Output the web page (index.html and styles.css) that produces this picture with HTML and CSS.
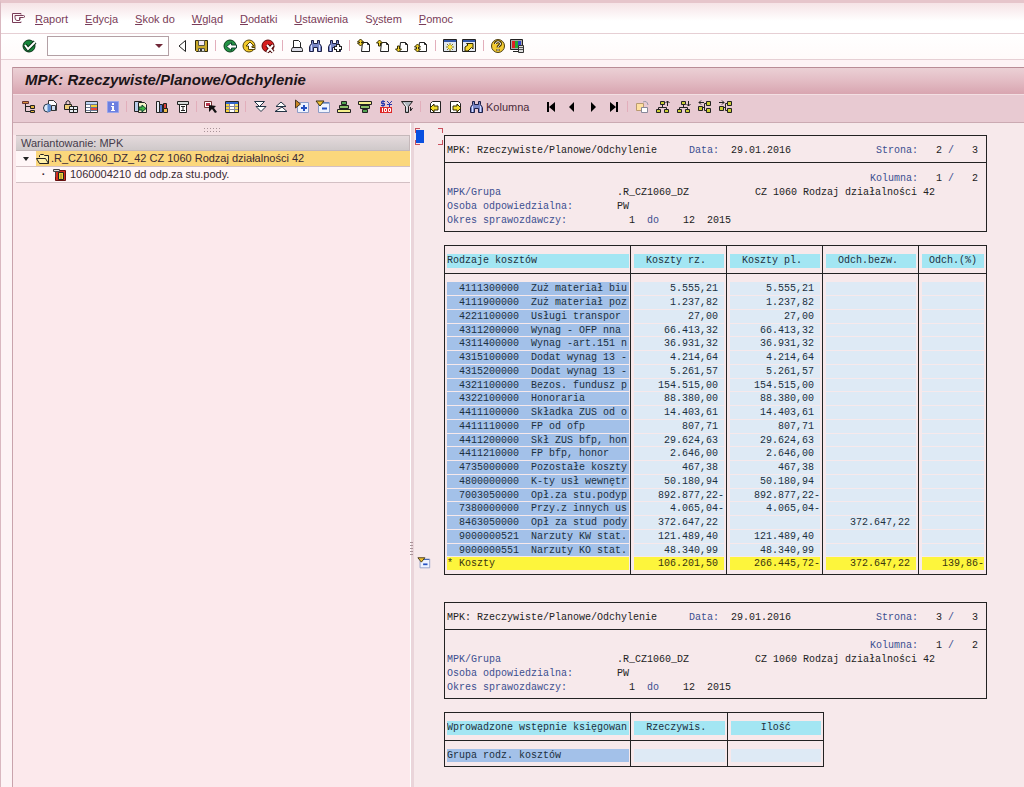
FILE: index.html
```html
<!DOCTYPE html>
<html lang="pl">
<head>
<meta charset="utf-8">
<title>MPK: Rzeczywiste/Planowe/Odchylenie</title>
<link rel="stylesheet" href="styles.css">
</head>
<body>
<svg class="defs" aria-hidden="true">
  <symbol id="binoc" viewBox="0 0 16 16"><path d="M3.500 2.500h2v3h4v-3h2v3l2 3v5h-4v-4h-4v4h-4v-5l2-3z" fill="#7a88c8" stroke="#1c1f45"/><path d="M3.500 7v6M11.500 7v6" stroke="#d5dcff"/></symbol>
  <symbol id="page" viewBox="0 0 16 16"><path d="M6.500 4.500h5l2 2v7h-8z" fill="#fff" stroke="#222"/><path d="M11.500 4.500v2h2" fill="none" stroke="#222"/></symbol>
  <symbol id="minus" viewBox="0 0 16 16"><path d="M3.500 3.500h11v10h-11z" fill="#eef3ff" stroke="#8d9cc6"/><path d="M4 4h10" stroke="#345ca8"/><path d="M1 2h8L5 7z" fill="#f0c030" stroke="#3a3010"/><path d="M7 9.500h5" stroke="#2450c0" stroke-width="2"/></symbol>
</svg>
<div class="window">
  <nav class="menu" aria-label="Menu">
    <button class="menu-icon" aria-label="Menu systemowe"><svg viewBox="0 0 16 16"><path d="M10 3.500V2.500H1.500v9H10v-1M4 6.500V4.500h8.500l1.500 1-1.500 1H8.500v3H6q-2 0-2-3M8.500 8h1.500" fill="none" stroke="#7a3c58"/></svg></button>
    <button><u>R</u>aport</button><button><u>E</u>dycja</button><button><u>S</u>kok do</button><button><u>W</u>gląd</button><button><u>D</u>odatki</button><button><u>U</u>stawienia</button><button>S<u>y</u>stem</button><button><u>P</u>omoc</button>
  </nav>

  <div class="standard">
    <button class="ok" aria-label="Enter"><svg viewBox="0 0 16 16"><ellipse cx="8" cy="8" rx="6" ry="6" fill="#16843a" stroke="#0b3418"/><path d="M4 7l3 4 7-7" fill="none" stroke="#0b3418" stroke-width="4"/><path d="M4 7l3 4 7-7" fill="none" stroke="#fff" stroke-width="2"/></svg></button>
    <div class="command"><input type="text" aria-label="Polecenie"><button aria-label="Historia"><svg viewBox="0 0 8 8"><path d="M0 2h8L4 6z" fill="#702838"/></svg></button></div>
    <button class="slim" aria-label="Zwiń"><svg viewBox="0 0 16 16"><path d="M11.500 2.500v11L5 8z" fill="#fff" stroke="#222"/></svg></button>
    <button aria-label="Zapisz"><svg viewBox="0 0 16 16"><path d="M2.500 2.500h12v11h-11l-1-1z" fill="#c9a92c" stroke="#2d2608"/><path d="M5.500 2.500h6v5h-6z" fill="#f3e9f6" stroke="#554"/><path d="M5.500 10.500h6v3h-6z" fill="#ddd" stroke="#554"/><path d="M7 11h2v2H7z" fill="#333"/></svg></button>
    <i class="sep"></i>
    <button aria-label="Wstecz"><svg viewBox="0 0 16 16"><circle cx="8" cy="8" r="6" fill="#249345" stroke="#0b3d1a"/><path d="M4.500 8.500l5-4v2.500h5v3h-5v2.500z" fill="#fff" stroke="#143"/></svg></button>
    <button aria-label="Wyjdź"><svg viewBox="0 0 16 16"><circle cx="8" cy="8" r="6" fill="#f2c92a" stroke="#55430a"/><path d="M9 4L5 8h2.500v3.500H14v-2h-3V8h2z" fill="#fff" stroke="#54430a"/></svg></button>
    <button aria-label="Anuluj"><svg viewBox="0 0 16 16"><circle cx="8" cy="8" r="6" fill="#d61f1f" stroke="#5a0808"/><path d="M7 7l6 7M13 7l-6 7" stroke="#400" stroke-width="4"/><path d="M7 7l6 7M13 7l-6 7" stroke="#fff" stroke-width="2"/></svg></button>
    <i class="sep"></i>
    <button aria-label="Drukuj"><svg viewBox="0 0 16 16"><path d="M4.500 9.500v-7h5l2 2v5" fill="#fff" stroke="#222"/><path d="M3.500 9.500h9l1 2v2h-11v-2z" fill="#dcdce6" stroke="#222"/></svg></button>
    <button aria-label="Szukaj"><svg><use href="#binoc"/></svg></button>
    <button aria-label="Szukaj dalej"><svg viewBox="0 0 16 16"><use href="#binoc" width="16" height="16"/><path d="M11 6v8M7 10h8" stroke="#222" stroke-width="4"/><path d="M11 7v6M8 10h6" stroke="#fff" stroke-width="2"/></svg></button>
    <i class="sep"></i>
    <button aria-label="Pierwsza strona"><svg viewBox="0 0 16 16"><use href="#page" width="16" height="16"/><path d="M4.500 1l3 3h-2v1h2l-3 3-3-3h2V4h-2z" fill="#f5d52c" stroke="#332b00"/></svg></button>
    <button aria-label="Poprzednia strona"><svg viewBox="0 0 16 16"><use href="#page" width="16" height="16"/><path d="M4.500 2l3 3h-2v3h-2V5h-2z" fill="#f5d52c" stroke="#332b00"/></svg></button>
    <button aria-label="Następna strona"><svg viewBox="0 0 16 16"><use href="#page" width="16" height="16"/><path d="M4.500 14l3-3h-2V8h-2v3h-2z" fill="#f5d52c" stroke="#332b00"/></svg></button>
    <button aria-label="Ostatnia strona"><svg viewBox="0 0 16 16"><use href="#page" width="16" height="16"/><path d="M4.500 14l3-3h-2V9h2l-3-3-3 3h2v2h-2z" fill="#f5d52c" stroke="#332b00"/></svg></button>
    <i class="sep"></i>
    <button aria-label="Nowa sesja"><svg viewBox="0 0 16 16"><path d="M1.500 1.500h13v12h-13z" fill="#dfe6ee" stroke="#222"/><path d="M2 3h12" stroke="#3156a8" stroke-width="2"/><path d="M8 5v8M4 9h8M5 6l6 6M11 6l-6 6" stroke="#8f7a10"/><circle cx="8" cy="9" r="2" fill="#ffe838"/></svg></button>
    <button aria-label="Skrót"><svg viewBox="0 0 16 16"><path d="M1.500 1.500h13v12h-13z" fill="#e5e9f2" stroke="#222"/><path d="M2 3h12" stroke="#3156a8" stroke-width="2"/><path d="M4 13V9l3-2-1.500-1.500H12V11l-1.500-1.500L7 13z" fill="#f5d52c" stroke="#332b00"/></svg></button>
    <i class="sep"></i>
    <button aria-label="Pomoc"><svg viewBox="0 0 16 16"><circle cx="8" cy="8" r="6.500" fill="#f3cb32" stroke="#4a3c10"/><path d="M5.500 6c0-3 5-3 5 0 0 1.500-2.500 1.500-2.500 3.500M8 11v2" fill="none" stroke="#443200" stroke-width="3"/><path d="M5.500 6c0-3 5-3 5 0 0 1.500-2.500 1.500-2.500 3.500M8 11v2" fill="none" stroke="#fff"/></svg></button>
    <button aria-label="Układ lokalny"><svg viewBox="0 0 16 16"><path d="M1.500 1.500h12v10h-12z" fill="#aaa" stroke="#222"/><path d="M3 3h3v7H3z" fill="#d22"/><path d="M6 3h3v7H6z" fill="#2a3"/><path d="M9 3h3v7H9z" fill="#34c"/><path d="M4 13.500h5" stroke="#222"/><path d="M9.500 7.500h5v7h-5z" fill="#ddd" stroke="#333"/><path d="M10 9.500h4M10 11.500h4" stroke="#555"/></svg></button>
  </div>

  <main class="app">
    <header>
      <h1>MPK: Rzeczywiste/Planowe/Odchylenie</h1>
      <div class="tools">
        <button aria-label="Hierarchia"><svg viewBox="0 0 16 16"><path d="M1.500 2.500h6v2h-6z" fill="#d98c3a" stroke="#633"/><path d="M4.500 5v7.500h5M4.500 7.500h5" fill="none" stroke="#222"/><path d="M9.500 6.500h4v3h-4zM9.500 11.500h4v2h-4z" fill="#e3b33c" stroke="#222"/></svg></button>
        <button aria-label="Raport"><svg viewBox="0 0 16 16"><path d="M6.500 1.500h5l3 3v7h-8z" fill="#fff" stroke="#333"/><circle cx="5.500" cy="9" r="4" fill="#dce9fb" stroke="#234"/><path d="M5.500 5v8a4 4 0 0 0 0-8z" fill="#5d8ed0"/><path d="M9.500 6.500h4v5h-4z" fill="#cde" stroke="#333"/></svg></button>
        <button aria-label="Blokada"><svg viewBox="0 0 16 16"><path d="M3 6V3q2-3 4 0v3" fill="none" stroke="#222"/><path d="M1.500 5.500h7v5h-7z" fill="#f0cf78" stroke="#222"/><path d="M6.500 7.500h8v6h-8zM6.500 10.500h8M10.500 7v6" fill="#e8edf2" stroke="#222"/></svg></button>
        <button aria-label="Tabela"><svg viewBox="0 0 16 16"><path d="M1.500 2.500h12v11h-12z" fill="#fff" stroke="#333"/><path d="M2 3h11v2H2z" fill="#bcd3f0"/><path d="M7 6h6v2H7z" fill="#f5cf35"/><path d="M7 9h6v2H7z" fill="#e84a3c"/><path d="M2 5.500h11M2 8.500h11M2 11.500h11M6.500 5v8" stroke="#6b7892"/></svg></button>
        <button aria-label="Informacja"><svg viewBox="0 0 16 16"><path d="M2.500 2.500h11v11h-11z" fill="#6c7fe0" stroke="#98a4ea"/><path d="M7 4h2v2H7zM6 7h3v4h1v1H6v-1h1V8H6z" fill="#fff"/></svg></button>
        <i class="sep"></i>
        <button aria-label="Eksport"><svg viewBox="0 0 16 16"><path d="M1.500 2.500h7v10h-7z" fill="#b9cdea" stroke="#222"/><path d="M5.500 3.500h6l2 2v8h-8z" fill="#f4f4c8" stroke="#222"/><path d="M6 8h3V6l4 3.500L9 13v-2H6z" fill="#3cb441" stroke="#143"/></svg></button>
        <button aria-label="Wykres"><svg viewBox="0 0 16 16"><path d="M2.500 2.500h3v11h-3z" fill="#e9edf4" stroke="#222"/><path d="M5.500 5.500h3v8h-3z" fill="#5678ca" stroke="#222"/><path d="M9.500 4.500h3v5h-3z" fill="#d9403a" stroke="#222"/><path d="M9.500 9.500h4v4h-4z" fill="#f1bc4c" stroke="#222"/></svg></button>
        <button aria-label="Kolumny tekstu"><svg viewBox="0 0 16 16"><path d="M2.500 2.500h11v3h-11z" fill="#d5d9d8" stroke="#222"/><path d="M4.500 5.500h7v8h-7z" fill="#fff" stroke="#222"/><path d="M6 7.500h4M8 8v4M6 11.500h4" stroke="#222"/></svg></button>
        <i class="sep"></i>
        <button aria-label="Wybierz"><svg viewBox="0 0 16 16"><path d="M1.500 2.500h7v6h-7z" fill="#fff" stroke="#733"/><path d="M3 4h4v3H3z" fill="#b8344c"/><path d="M6 6l7 1-2 2 3 4-2 1-3-4-3 3z" fill="#111"/></svg></button>
        <button aria-label="Kolumny"><svg viewBox="0 0 16 16"><path d="M1.500 2.500h13v11h-13z" fill="#fff" stroke="#222"/><path d="M2 3h12v2H2z" fill="#3265c8"/><path d="M2 5h3v8H2z" fill="#f7d33e"/><path d="M11 5h3v8h-3z" fill="#f7e05e"/><path d="M5.500 5v8M10.500 5v8M2 7.500h12M2 10.500h12" stroke="#889"/></svg></button>
        <i class="sep"></i>
        <button aria-label="Rozwiń"><svg viewBox="0 0 16 16"><path d="M2.500 2.500h10l-5 5zM4 7.500h10l-5 5z" fill="#fff" stroke="#234"/></svg></button>
        <button aria-label="Zwiń"><svg viewBox="0 0 16 16"><path d="M3 7.500h10l-5-4.500zM2 12.500h12L9 8z" fill="#fff" stroke="#234"/></svg></button>
        <button aria-label="Rozwiń poziom"><svg viewBox="0 0 16 16"><path d="M3.500 3.500h11v10h-11z" fill="#eef3ff" stroke="#8d9cc6"/><path d="M1.500 1l5 4-5 4z" fill="#c88624" stroke="#432"/><path d="M7 9h6M10 6v6" stroke="#2450c0" stroke-width="2"/></svg></button>
        <button aria-label="Zwiń poziom"><svg><use href="#minus"/></svg></button>
        <button aria-label="Sortuj rosnąco"><svg viewBox="0 0 16 16"><path d="M5.500 2.500h5v3h-5z" fill="#52a452" stroke="#222"/><path d="M3.500 6.500h9v3h-9z" fill="#8cc068" stroke="#222"/><path d="M1.500 10.500h13v3h-13z" fill="#f5f08b" stroke="#222"/></svg></button>
        <button aria-label="Sortuj malejąco"><svg viewBox="0 0 16 16"><path d="M1.500 2.500h13v3h-13z" fill="#f5f08b" stroke="#222"/><path d="M3.500 6.500h9v3h-9z" fill="#8cc068" stroke="#222"/><path d="M5.500 10.500h5v3h-5z" fill="#52a452" stroke="#222"/></svg></button>
        <button aria-label="Waluta"><svg viewBox="0 0 16 16"><path d="M7 2.500H3.500v2H6.500v2H3M5 1v7M9 2l2.500 2.500L14 2M11.500 4v4M9 5.500h5" fill="none" stroke="#2537ae"/><path d="M2 8h12v6H2z" fill="#e02828"/><path d="M4.500 9v4M6.500 9.500h2v3h-2zM10.500 9.500h2v3h-2z" fill="none" stroke="#fff"/></svg></button>
        <button aria-label="Filtr"><svg viewBox="0 0 16 16"><path d="M2.500 2.500h11L9.500 7.500v6h-3v-6z" fill="#aeb6bd" stroke="#222"/><path d="M5 4l3 4v4" fill="none" stroke="#fff"/><path d="M11.500 8v4l2-3" fill="none" stroke="#222"/></svg></button>
        <i class="sep"></i>
        <button aria-label="Poprzednia kolumna"><svg viewBox="0 0 16 16"><path d="M5.500 2.500h8v11h-10v-9z" fill="#fff" stroke="#222"/><path d="M3 9l4-4v2h4v4H7v2z" fill="#f1dc2d" stroke="#332b00"/></svg></button>
        <button aria-label="Następna kolumna"><svg viewBox="0 0 16 16"><path d="M2.500 2.500h8l2 2v9h-10z" fill="#fff" stroke="#222"/><path d="M13 9L9 5v2H5v4h4v2z" fill="#f1dc2d" stroke="#332b00"/></svg></button>
        <button class="labelled"><svg><use href="#binoc"/></svg>Kolumna</button>
        <button aria-label="Pierwsza"><svg viewBox="0 0 16 16"><path d="M4 3h2v10H4zM12 3v10L6 8z" fill="#000"/></svg></button>
        <button aria-label="Poprzednia"><svg viewBox="0 0 16 16"><path d="M10 3v10L5 8z" fill="#000"/></svg></button>
        <button aria-label="Następna"><svg viewBox="0 0 16 16"><path d="M6 3v10l5-5z" fill="#000"/></svg></button>
        <button aria-label="Ostatnia"><svg viewBox="0 0 16 16"><path d="M10 3h2v10h-2zM4 3v10l6-5z" fill="#000"/></svg></button>
        <i class="sep"></i>
        <button aria-label="Kopiuj"><svg viewBox="0 0 16 16"><path d="M2.500 4.500h7v7h-7z" fill="#ffe0a0" stroke="#b99a70"/><path d="M7.500 8.500h6v5h-6z" fill="#fff" stroke="#889"/><path d="M9 3q4-2 5 3" fill="none" stroke="#99a"/></svg></button>
        <button aria-label="Poziom w górę"><svg viewBox="0 0 16 16"><path d="M7.500 5v3M3.500 11V8.500h8V11M12.500 7V2M10.500 4l2-2 2 2" fill="none" stroke="#222"/><path d="M5.500 2.500h4v3h-4zM1.500 10.500h4v3h-4zM9.500 10.500h4v3h-4z" fill="#c8cc35" stroke="#222"/></svg></button>
        <button aria-label="Poziom w dół"><svg viewBox="0 0 16 16"><path d="M7.500 5v3M3.500 11V8.500h8V11M12.500 2v5M10.500 5l2 2 2-2" fill="none" stroke="#222"/><path d="M5.500 2.500h4v3h-4zM1.500 10.500h4v3h-4zM9.500 10.500h4v3h-4z" fill="#c8cc35" stroke="#222"/></svg></button>
        <button aria-label="W lewo"><svg viewBox="0 0 16 16"><path d="M5 8.500h2.500M10 4.500H7.500v7H10M7 3.500H2M4 1.500l-2 2 2 2" fill="none" stroke="#222"/><path d="M1.500 7.500h4v4h-4zM9.500 2.500h4v4h-4zM9.500 9.500h4v4h-4z" fill="#c8cc35" stroke="#222"/></svg></button>
        <button aria-label="W prawo"><svg viewBox="0 0 16 16"><path d="M5 8.500h2.500M10 4.500H7.500v7H10M1 3.500h5M4 1.500l2 2-2 2" fill="none" stroke="#222"/><path d="M1.500 7.500h4v4h-4zM9.500 2.500h4v4h-4zM9.500 9.500h4v4h-4z" fill="#c8cc35" stroke="#222"/></svg></button>
      </div>
    </header>

    <div class="panes">
      <aside>
        <div class="grip"></div>
        <h2>Wariantowanie: MPK</h2>
        <ul>
          <li class="selected"><span class="twist"><svg viewBox="0 0 8 8"><path d="M1 2h6L4 6z" fill="#222"/></svg></span><span class="node"><svg viewBox="0 0 14 14"><path d="M3.500 5V3.500l1-1h3l1 1h4v8h-9l-3-5h9l3 5" fill="#fff0a8" stroke="#222"/></svg>.R_CZ1060_DZ_42 CZ 1060 Rodzaj działalności 42</span></li>
          <li class="leaf"><span class="twist">·</span><span class="node"><svg viewBox="0 0 14 14"><path d="M2.500 2.500h10v10h-10z" fill="#d52b20" stroke="#611"/><path d="M5.500 4.500h5v7h-5z" fill="#e8d43c" stroke="#222"/><path d="M8 6v5" stroke="#973"/><path d="M.5 1.500h6v2h-6z" fill="#ddd" stroke="#444"/><path d="M2.500 4v5" stroke="#444"/></svg>1060004210 dd odp.za stu.pody.</span></li>
        </ul>
      </aside>
      <div class="splitter"></div>
      <section class="report">
        <div class="cursor"></div>
        <div class="sheet">
          <div class="head">
            <div class="line first"><span>MPK: Rzeczywiste/Planowe/Odchylenie</span><b>Data:</b><span>29.01.2016</span><span class="end"><b>Strona:</b>   2 <b>/</b>   3</span></div>
            <div class="info">
              <div class="end"><b>Kolumna:</b>   1 <b>/</b>   2</div>
              <div class="pair"><b>MPK/Grupa</b><span>.R_CZ1060_DZ           CZ 1060 Rodzaj działalności 42</span></div>
              <div class="pair"><b>Osoba odpowiedzialna:</b><span>PW</span></div>
              <div class="pair"><b>Okres sprawozdawczy:</b><span>  1  <b>do</b>    12  2015</span></div>
            </div>
          </div>

          <table class="costs">
            <colgroup><col class="name"><col class="num"><col class="num"><col class="num"><col class="pct"></colgroup>
            <thead><tr><th><span>Rodzaje kosztów</span></th><th><span>Koszty rz.</span></th><th><span>Koszty pl.</span></th><th><span>Odch.bezw.</span></th><th class="even"><span>Odch.(%)</span></th></tr></thead>
            <tbody>
              <tr><td><span>  4111300000  Zuż materiał biu</span></td><td><span>5.555,21 </span></td><td><span>5.555,21 </span></td><td><span> </span></td><td><span> </span></td></tr>
              <tr><td><span>  4111900000  Zuż materiał poz</span></td><td><span>1.237,82 </span></td><td><span>1.237,82 </span></td><td><span> </span></td><td><span> </span></td></tr>
              <tr><td><span>  4221100000  Usługi transpor</span></td><td><span>27,00 </span></td><td><span>27,00 </span></td><td><span> </span></td><td><span> </span></td></tr>
              <tr><td><span>  4311200000  Wynag - OFP nna</span></td><td><span>66.413,32 </span></td><td><span>66.413,32 </span></td><td><span> </span></td><td><span> </span></td></tr>
              <tr><td><span>  4311400000  Wynag -art.151 n</span></td><td><span>36.931,32 </span></td><td><span>36.931,32 </span></td><td><span> </span></td><td><span> </span></td></tr>
              <tr><td><span>  4315100000  Dodat wynag 13 -</span></td><td><span>4.214,64 </span></td><td><span>4.214,64 </span></td><td><span> </span></td><td><span> </span></td></tr>
              <tr><td><span>  4315200000  Dodat wynag 13 -</span></td><td><span>5.261,57 </span></td><td><span>5.261,57 </span></td><td><span> </span></td><td><span> </span></td></tr>
              <tr><td><span>  4321100000  Bezos. fundusz p</span></td><td><span>154.515,00 </span></td><td><span>154.515,00 </span></td><td><span> </span></td><td><span> </span></td></tr>
              <tr><td><span>  4322100000  Honoraria</span></td><td><span>88.380,00 </span></td><td><span>88.380,00 </span></td><td><span> </span></td><td><span> </span></td></tr>
              <tr><td><span>  4411100000  Składka ZUS od o</span></td><td><span>14.403,61 </span></td><td><span>14.403,61 </span></td><td><span> </span></td><td><span> </span></td></tr>
              <tr><td><span>  4411110000  FP od ofp</span></td><td><span>807,71 </span></td><td><span>807,71 </span></td><td><span> </span></td><td><span> </span></td></tr>
              <tr><td><span>  4411200000  Skł ZUS bfp, hon</span></td><td><span>29.624,63 </span></td><td><span>29.624,63 </span></td><td><span> </span></td><td><span> </span></td></tr>
              <tr><td><span>  4411210000  FP bfp, honor</span></td><td><span>2.646,00 </span></td><td><span>2.646,00 </span></td><td><span> </span></td><td><span> </span></td></tr>
              <tr><td><span>  4735000000  Pozostałe koszty</span></td><td><span>467,38 </span></td><td><span>467,38 </span></td><td><span> </span></td><td><span> </span></td></tr>
              <tr><td><span>  4800000000  K-ty usł wewnętr</span></td><td><span>50.180,94 </span></td><td><span>50.180,94 </span></td><td><span> </span></td><td><span> </span></td></tr>
              <tr><td><span>  7003050000  Opł.za stu.podyp</span></td><td><span>892.877,22-</span></td><td><span>892.877,22-</span></td><td><span> </span></td><td><span> </span></td></tr>
              <tr><td><span>  7380000000  Przy.z innych us</span></td><td><span>4.065,04-</span></td><td><span>4.065,04-</span></td><td><span> </span></td><td><span> </span></td></tr>
              <tr><td><span>  8463050000  Opł za stud pody</span></td><td><span>372.647,22 </span></td><td><span> </span></td><td><span>372.647,22 </span></td><td><span> </span></td></tr>
              <tr><td><span>  9000000521  Narzuty KW stat.</span></td><td><span>121.489,40 </span></td><td><span>121.489,40 </span></td><td><span> </span></td><td><span> </span></td></tr>
              <tr><td><span>  9000000551  Narzuty KO stat.</span></td><td><span>48.340,99 </span></td><td><span>48.340,99 </span></td><td><span> </span></td><td><span> </span></td></tr>
              <tr class="total"><td><button aria-label="Zwiń"><svg><use href="#minus"/></svg></button><span>* Koszty</span></td><td><span>106.201,50 </span></td><td><span>266.445,72-</span></td><td><span>372.647,22 </span></td><td><span>139,86-</span></td></tr>
            </tbody>
          </table>

          <div class="head next">
            <div class="line first"><span>MPK: Rzeczywiste/Planowe/Odchylenie</span><b>Data:</b><span>29.01.2016</span><span class="end"><b>Strona:</b>   3 <b>/</b>   3</span></div>
            <div class="info">
              <div class="end"><b>Kolumna:</b>   1 <b>/</b>   2</div>
              <div class="pair"><b>MPK/Grupa</b><span>.R_CZ1060_DZ           CZ 1060 Rodzaj działalności 42</span></div>
              <div class="pair"><b>Osoba odpowiedzialna:</b><span>PW</span></div>
              <div class="pair"><b>Okres sprawozdawczy:</b><span>  1  <b>do</b>    12  2015</span></div>
            </div>
          </div>

          <table class="entries">
            <colgroup><col class="name"><col class="num"><col class="num"></colgroup>
            <thead><tr><th><span>Wprowadzone wstępnie księgowan</span></th><th><span>Rzeczywis.</span></th><th class="even"><span>Ilość</span></th></tr></thead>
            <tbody><tr><td><span>Grupa rodz. kosztów</span></td><td><span> </span></td><td><span> </span></td></tr></tbody>
          </table>
        </div>
      </section>
    </div>
  </main>
</div>
</body>
</html>
```
FILE: styles.css
```css
* { box-sizing: border-box; }
body { margin: 0; background: #fdf3f5; color: #3a2a35; font: 11px/14px "Liberation Sans", Arial, sans-serif; }
button { padding: 0; border: 0; background: none; color: inherit; font: inherit; }
svg { display: block; width: 16px; height: 16px; }
.defs { position: absolute; width: 0; height: 0; }
.window { display: flex; flex-direction: column; min-height: 100vh; border-left: 1px solid #d9b8c0; border-top: 3px solid #e6c5cb; }

.menu { display: flex; align-items: center; gap: 17px; height: 31px; padding: 2px 10px 0; background: linear-gradient(#f6e3e6, #fff 60%); border-bottom: 1px solid #e6cfd4; color: #7a3c58; }
.menu-icon { margin-right: -9px; }

.standard { display: flex; align-items: center; height: 26px; padding: 0 18px 2px; background: linear-gradient(#fff, #fffafa); border-bottom: 1px solid #e6cfd4; }
.standard > button { display: flex; justify-content: center; width: 19px; flex: none; }
.command { display: flex; align-items: center; width: 122px; height: 20px; margin: 0 3px 0 9px; background: #fff; border: 1px solid #b3a0a5; }
.command input { flex: 1; min-width: 0; height: 16px; padding: 0 3px; border: 0; outline: 0; background: none; font: inherit; }
.command button { padding: 0 5px; }
.command svg { width: 8px; height: 8px; }
.sep { flex: none; width: 10px; height: 11px; background: linear-gradient(#e2aebb, #e2aebb) center / 1px 100% no-repeat; }

.app { flex: 1; display: flex; flex-direction: column; margin: 7px 0 0 11px; border-left: 1px solid #c9a3ac; }
h1 { margin: 0; height: 27px; padding: 0 12px; border-top: 1px solid #b98c96; background: linear-gradient(#ebd0d5, #e3bcc4 50%, #d8a5b0); color: #1c1418; font: italic bold 15px/23px "Liberation Sans", Arial, sans-serif; }
.tools { display: flex; align-items: center; height: 29px; padding: 0 5px 4px; border-bottom: 1px solid #cbaab2; border-top: 1px solid #f3dfe3; background: #e8cad2; color: #4a2a3a; }
.tools button { display: flex; justify-content: center; align-items: center; flex: none; width: 21px; }
.tools .labelled { width: auto; margin: 0 11px 0 3px; gap: 1px; }
.tools .sep { width: 7px; }

.panes { flex: 1; display: flex; }
aside { width: 397px; padding-left: 3px; background: #fce9ec; flex: none; }
.grip { height: 12px; margin-left: -3px; padding-top: 5px; background: #f5e1e4; }
.grip::after { content: ""; display: block; width: 16px; height: 4px; margin: auto; background: repeating-linear-gradient(90deg, #a89398 0 1px, transparent 1px 3px) 0 0 / 100% 1px no-repeat, repeating-linear-gradient(90deg, #a89398 0 1px, transparent 1px 3px) 0 100% / 100% 1px no-repeat; }
h2 { margin: 0; height: 16px; padding: 0 5px; border: 1px solid #c5b8ba; border-left: 0; background: linear-gradient(#e5dadc, #cfc9ca); color: #453b4a; font: 11px/14px "Liberation Sans", Arial, sans-serif; }
ul { margin: 0; padding: 0; list-style: none; }
li { display: flex; height: 16px; border-bottom: 1px solid #d3c0c4; background: #fff6f7; line-height: 15px; }
.twist { display: flex; align-items: center; justify-content: center; width: 20px; font-weight: bold; }
.twist svg { width: 8px; height: 8px; }
.node { display: flex; align-items: center; gap: 1px; flex: 1; }
.selected .node { background: #fbd77c; }
.leaf .twist { padding-left: 18px; width: 37px; }
.leaf .node { gap: 3px; }
.node svg { width: 14px; height: 14px; }
.splitter { flex: none; width: 4px; background: linear-gradient(90deg, #fff 0 1px, #ead5da 1px); display: flex; align-items: flex-end; padding-bottom: 230px; }
.splitter::after { content: ""; width: 3px; height: 15px; background: repeating-linear-gradient(#a89398 0 1px, transparent 1px 3px); }

.report { position: relative; flex: 1; min-width: 574px; padding: 12px 0 18px 30px; background: #f7e9eb; color: #222; font: 10px/14px "Liberation Mono", "Courier New", monospace; white-space: nowrap; }
.cursor { position: absolute; left: 1px; top: 5px; width: 28px; height: 17px; background: linear-gradient(#0a50e0, #0a50e0) 1px 2px / 8px 13px no-repeat, linear-gradient(#c8505c, #c8505c) 0 0 / 5px 1px no-repeat, linear-gradient(#c8505c, #c8505c) 0 100% / 5px 1px no-repeat, linear-gradient(#c8505c, #c8505c) 0 0 / 1px 5px no-repeat, linear-gradient(#c8505c, #c8505c) 0 100% / 1px 5px no-repeat, linear-gradient(#c8505c, #c8505c) 100% 0 / 5px 1px no-repeat, linear-gradient(#c8505c, #c8505c) 100% 100% / 5px 1px no-repeat, linear-gradient(#c8505c, #c8505c) 100% 0 / 1px 5px no-repeat, linear-gradient(#c8505c, #c8505c) 100% 100% / 1px 5px no-repeat; }
.sheet { display: flex; flex-direction: column; align-items: flex-start; gap: 13px; }
.sheet b { font-weight: normal; color: #3c4f90; }
.head { width: 543px; border: 1px solid #222; }
.head.next { margin-top: 14px; }
.line, .pair, .head .end, .head span { white-space: pre; }
.first { display: grid; grid-template-columns: 242px 42px 1fr auto; height: 27px; padding: 8px 8px 0 2px; border-bottom: 1px solid #222; }
.info { padding: 9px 0 3px 2px; }
.info .end { padding-right: 8px; text-align: right; }
.pair { display: grid; grid-template-columns: 170px 1fr; }

table { border-collapse: collapse; table-layout: fixed; border: 1px solid #222; }
.costs { width: 543px; }
.entries { width: 380px; }
.name { width: 186px; }
.costs .num { width: 96px; }
th, td { padding: 0 2px 1px 3px; border: 0 solid #222; border-width: 0 1px; font-weight: normal; text-align: right; }
th:first-child, td:first-child { padding-left: 2px; padding-right: 1px; text-align: left; }
th { height: 28px; padding-top: 3px; padding-bottom: 0; border-bottom-width: 1px; text-align: center; }
th span, td span { display: block; height: 13px; line-height: 13px; white-space: pre; overflow: hidden; color: #1c3040; }
th span { height: 14px; padding-right: 6px; line-height: 14px; background: #a3e6f3; }
th:first-child span, .even span { padding-right: 0; }
td span { background: #deeaf5; }
td:first-child span { background: #a3c1e9; }
tbody tr:nth-child(4n) span { height: 12px; }
tbody tr:first-child td { padding-top: 8px; }
tbody tr:last-child td { padding-bottom: 4px; }
.total td:first-child { position: relative; }
.total td span, .total td:first-child span { background: #fdf53c; color: #3a3410; }
.total button { position: absolute; left: -28px; top: -1px; }
.total svg { width: 14px; height: 14px; }
```
